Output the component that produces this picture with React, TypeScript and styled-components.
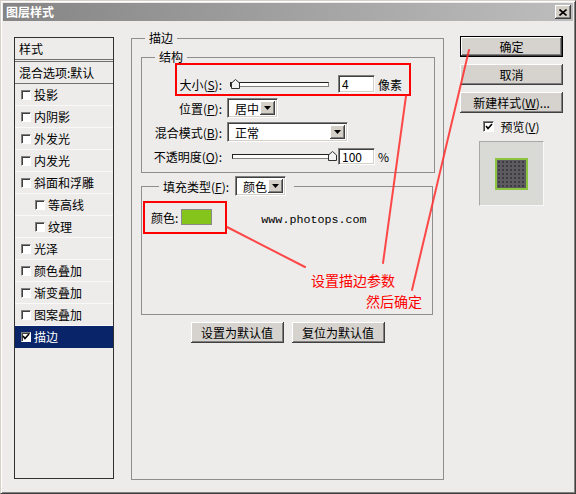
import React from "react";
import styled, { createGlobalStyle } from "styled-components";

const GlobalStyle = createGlobalStyle`
  html, body { margin: 0; padding: 0; background: #edecea; }
  body {
    font-family: "Noto Sans CJK SC", "Liberation Sans", sans-serif;
    font-size: 12px;
    color: #000;
  }
  * { box-sizing: border-box; }
`;

const Window = styled.div`
  position: relative;
  width: 576px;
  height: 494px;
  background: #edecea;
  border: 1px solid;
  border-color: #d4d0c8 #404040 #404040 #d4d0c8;
  box-shadow: inset 1px 1px #ffffff, inset -1px -1px #808080;
  padding: 2px;
  display: flex;
  flex-direction: column;
  overflow: hidden;
`;

const TitleBar = styled.div`
  height: 18px;
  display: flex;
  align-items: center;
  justify-content: space-between;
  padding: 0 2px 0 3px;
  background: linear-gradient(to right, #858585, #bdbdbd);
`;

const Title = styled.span`
  color: #fff;
  font-weight: 700;
  font-size: 12px;
  line-height: 14px;
`;

const CloseButton = styled.div`
  width: 16px;
  height: 14px;
  background: #d4d0c8;
  display: flex;
  align-items: center;
  justify-content: center;
  box-shadow: inset -1px -1px #404040, inset 1px 1px #fff, inset -2px -2px #808080;
`;

const Body = styled.div`
  flex: 1;
  display: flex;
  align-items: flex-start;
  padding: 10px 0 0 11px;
`;

/* ---------- left style list ---------- */

const StyleList = styled.div`
  width: 100px;
  height: 442px;
  margin-top: 6px;
  border: 1px solid #303030;
  display: flex;
  flex-direction: column;
`;

const ListHeader = styled.div`
  height: 24px;
  line-height: 21px;
  padding-left: 4px;
  border-bottom: 3px double #707070;
`;

const ListItem = styled.div<{ $indent?: number; $selected?: boolean; $rule?: boolean }>`
  height: 22px;
  display: flex;
  align-items: center;
  gap: 3px;
  padding-left: ${(p) => p.$indent ?? 6}px;
  background: ${(p) => (p.$selected ? "#0a246a" : "transparent")};
  color: ${(p) => (p.$selected ? "#fff" : "#000")};
  border-bottom: 1px solid ${(p) => (p.$rule ? "#707070" : p.$selected ? "#0a246a" : "#f9f9f9")};
`;

const Box = styled.span<{ $size?: number }>`
  width: ${(p) => p.$size ?? 10}px;
  height: ${(p) => p.$size ?? 10}px;
  flex: none;
  background: #fff;
  border: 1px solid;
  border-color: #808080 #ffffff #ffffff #808080;
  box-shadow: inset 1px 1px #404040;
  display: flex;
  align-items: center;
  justify-content: center;
`;

const Check: React.FC<{ checked?: boolean; size?: number }> = ({ checked, size }) => (
  <Box $size={size}>
    {checked && (
      <svg width="8" height="7" viewBox="0 0 8 7">
        <path d="M1 3 L3 5.5 L7 1" stroke="#000" strokeWidth="1.6" fill="none" />
      </svg>
    )}
  </Box>
);

/* ---------- centre panel ---------- */

const Center = styled.div`
  margin-left: 17px;
`;

const Group = styled.fieldset<{ $w: number; $h: number; $gap?: number }>`
  width: ${(p) => p.$w}px;
  height: ${(p) => p.$h}px;
  min-width: 0;
  margin: ${(p) => p.$gap ?? 0}px 0 0 0;
  padding: 0;
  border: 1px solid #8e8e8e;
`;

const Legend = styled.legend<{ $offset: number }>`
  margin-left: ${(p) => p.$offset}px;
  padding: 0 4px;
  line-height: 14px;
  font-size: 12px;
`;

const FillLegend = styled.legend`
  margin-left: 17px;
  padding: 0 8px 0 4px;
  height: 20px;
  display: flex;
  align-items: center;
  gap: 6px;
`;

const GroupInner = styled.div<{ $top: number }>`
  display: flex;
  flex-direction: column;
  padding: ${(p) => p.$top}px 9px 0 9px;
`;

const Rows = styled.div`
  display: flex;
  flex-direction: column;
  gap: 4px;
  padding-top: 10px;
`;

const Row = styled.div`
  height: 20px;
  display: flex;
  align-items: center;
`;

const Label = styled.span`
  width: 80px;
  margin-right: 5px;
  text-align: right;
  white-space: nowrap;
`;

const SliderWrap = styled.div<{ $w: number; $lead: number }>`
  position: relative;
  width: ${(p) => p.$w}px;
  height: 12px;
  margin-left: ${(p) => p.$lead}px;
  display: flex;
  align-items: center;
`;

const Track = styled.div`
  width: 100%;
  height: 5px;
  background: #fdfdfd;
  border: 1px solid;
  border-color: #202020 #808080 #808080 #202020;
`;

const Thumb = styled.svg<{ $end?: boolean }>`
  position: absolute;
  top: 1px;
  ${(p) => (p.$end ? "right: -4px;" : "left: 1px;")}
`;

const Slider: React.FC<{ w: number; lead: number; end?: boolean }> = ({ w, lead, end }) => (
  <SliderWrap $w={w} $lead={lead}>
    <Track />
    <Thumb $end={end} width="9" height="10" viewBox="0 0 9 10">
      <path d="M0.5 9.5 L0.5 4 L4.5 0.5 L8.5 4 L8.5 9.5 Z" fill="#f2f2f2" stroke="#303030" strokeWidth="1" />
    </Thumb>
  </SliderWrap>
);

const TextInput = styled.div<{ $lead: number; $h?: number }>`
  width: 37px;
  height: ${(p) => p.$h ?? 18}px;
  margin-left: ${(p) => p.$lead}px;
  background: #fff;
  border: 1px solid;
  border-color: #808080 #ffffff #ffffff #808080;
  box-shadow: inset 1px 1px #404040, inset -1px -1px #d4d0c8;
  padding-left: 3px;
  line-height: 16px;
`;

const Unit = styled.span`
  margin-left: 3px;
`;

const Select = styled.div<{ $w: number }>`
  width: ${(p) => p.$w}px;
  height: 20px;
  display: flex;
  align-items: stretch;
  background: #fff;
  border: 1px solid;
  border-color: #808080 #ffffff #ffffff #808080;
  box-shadow: inset 1px 1px #404040, inset -1px -1px #d4d0c8;
  padding: 2px;
`;

const SelectValue = styled.span`
  flex: 1;
  padding-left: 5px;
  line-height: 15px;
`;

const SelectArrow = styled.span`
  width: 15px;
  background: #d4d0c8;
  display: flex;
  align-items: center;
  justify-content: center;
  box-shadow: inset -1px -1px #404040, inset 1px 1px #fff, inset -2px -2px #808080;
`;

const Dropdown: React.FC<{ w: number; value: string }> = ({ w, value }) => (
  <Select $w={w}>
    <SelectValue>{value}</SelectValue>
    <SelectArrow>
      <svg width="7" height="4" viewBox="0 0 7 4">
        <path d="M0 0 H7 L3.5 4 Z" fill="#000" />
      </svg>
    </SelectArrow>
  </Select>
);

const ColorRow = styled.div`
  display: flex;
  align-items: center;
  height: 16px;
  margin-top: 13px;
`;

const Swatch = styled.span`
  width: 31px;
  height: 16px;
  margin-left: 3px;
  background: #84c41b;
  border: 1px solid #8a8a8a;
`;

const Url = styled.span`
  margin-left: 49px;
  font-family: "Liberation Mono", "Courier New", monospace;
  font-size: 11.7px;
  line-height: 16px;
  margin-top: 6px;
`;

const ButtonRow = styled.div`
  display: flex;
  justify-content: center;
  gap: 8px;
  margin-top: 7px;
`;

const Button = styled.div<{ $w: number; $default?: boolean }>`
  width: ${(p) => p.$w}px;
  height: 21px;
  display: flex;
  align-items: center;
  justify-content: center;
  background: #d6d3ce;
  border: ${(p) => (p.$default ? "1px solid #000" : "none")};
  box-shadow: inset -1px -1px #404040, inset 1px 1px #fff, inset -2px -2px #808080;
  white-space: nowrap;
`;

/* ---------- right column ---------- */

const Side = styled.div`
  width: 103px;
  margin-left: 16px;
  margin-top: 5px;
  display: flex;
  flex-direction: column;
  align-items: center;
  gap: 7px;
`;

const PreviewToggle = styled.div`
  height: 12px;
  display: flex;
  align-items: center;
  gap: 6px;
`;

const PreviewBox = styled.div`
  width: 65px;
  height: 65px;
  margin-top: 2px;
  background: #d9d9d6;
  border: 1px solid;
  border-color: #a8a8a8 #f8f8f8 #f8f8f8 #a8a8a8;
  display: flex;
  align-items: center;
  justify-content: center;
`;

const PreviewSquare = styled.div`
  width: 33px;
  height: 32px;
  background-color: #5d5a60;
  background-image: radial-gradient(#3c3a3e 0.7px, transparent 0.8px);
  background-size: 4px 4px;
  border: 2px solid #8cc43f;
`;

/* ---------- annotation layer ---------- */

const Annotations = styled.div`
  position: absolute;
  top: -1px;
  left: -1px;
  width: 576px;
  height: 494px;
  pointer-events: none;
`;

const Note = styled.div<{ $x: number; $y: number }>`
  position: absolute;
  left: ${(p) => p.$x}px;
  top: ${(p) => p.$y}px;
  color: #ff0000;
  font-size: 14px;
  line-height: 16px;
  white-space: nowrap;
`;

const items: { name: string; indent?: number }[] = [
  { name: "投影" },
  { name: "内阴影" },
  { name: "外发光" },
  { name: "内发光" },
  { name: "斜面和浮雕" },
  { name: "等高线", indent: 20 },
  { name: "纹理", indent: 20 },
  { name: "光泽" },
  { name: "颜色叠加" },
  { name: "渐变叠加" },
  { name: "图案叠加" },
];

export default function App() {
  return (
    <>
      <GlobalStyle />
      <Window>
        <TitleBar>
          <Title>图层样式</Title>
          <CloseButton>
            <svg width="8" height="7" viewBox="0 0 8 7">
              <path d="M0.5 0.5 L7.5 6.5 M7.5 0.5 L0.5 6.5" stroke="#000" strokeWidth="1.6" />
            </svg>
          </CloseButton>
        </TitleBar>

        <Body>
          <StyleList>
            <ListHeader>样式</ListHeader>
            <ListItem $indent={4} $rule>混合选项:默认</ListItem>
            {items.map((it) => (
              <ListItem key={it.name} $indent={it.indent}>
                <Check />
                {it.name}
              </ListItem>
            ))}
            <ListItem $selected>
              <Check checked />
              描边
            </ListItem>
          </StyleList>

          <Center>
            <Group $w={313} $h={449}>
              <Legend $offset={13}>描边</Legend>
              <GroupInner $top={5}>
                <Group $w={294} $h={123}>
                  <Legend $offset={13}>结构</Legend>
                  <Rows>
                    <Row>
                      <Label>大小(<u>S</u>):</Label>
                      <Slider w={99} lead={3} />
                      <TextInput $lead={9}>4</TextInput>
                      <Unit>像素</Unit>
                    </Row>
                    <Row>
                      <Label>位置(<u>P</u>):</Label>
                      <Dropdown w={51} value="居中" />
                    </Row>
                    <Row>
                      <Label>混合模式(<u>B</u>):</Label>
                      <Dropdown w={121} value="正常" />
                    </Row>
                    <Row>
                      <Label>不透明度(<u>O</u>):</Label>
                      <Slider w={101} lead={5} end />
                      <TextInput $lead={5} $h={17}>100</TextInput>
                      <Unit>%</Unit>
                    </Row>
                  </Rows>
                </Group>

                <Group $w={292} $h={139} $gap={3}>
                  <FillLegend>
                    <span>填充类型(<u>F</u>):</span>
                    <Dropdown w={51} value="颜色" />
                  </FillLegend>
                  <GroupInner $top={0}>
                    <ColorRow>
                      颜色:
                      <Swatch />
                      <Url>www.photops.com</Url>
                    </ColorRow>
                  </GroupInner>
                </Group>

                <ButtonRow>
                  <Button $w={93}>设置为默认值</Button>
                  <Button $w={93}>复位为默认值</Button>
                </ButtonRow>
              </GroupInner>
            </Group>
          </Center>

          <Side>
            <Button $w={103} $default>确定</Button>
            <Button $w={103}>取消</Button>
            <Button $w={103}>新建样式(<u>W</u>)...</Button>
            <PreviewToggle>
              <Check checked size={11} />
              <span>预览(<u>V</u>)</span>
            </PreviewToggle>
            <PreviewBox>
              <PreviewSquare />
            </PreviewBox>
          </Side>
        </Body>

        <Annotations>
          <svg width="576" height="494" viewBox="0 0 576 494">
            <rect x="176" y="64" width="234" height="31" fill="none" stroke="#ff0000" strokeWidth="2" />
            <rect x="144" y="202" width="82" height="31" fill="none" stroke="#ff0000" strokeWidth="2" />
            <g stroke="#ff2b2b" strokeWidth="2" strokeOpacity="0.85" strokeLinecap="round">
              <line x1="406" y1="96" x2="383" y2="263" />
              <line x1="469" y1="50" x2="412" y2="290" />
              <line x1="227" y1="227" x2="305" y2="267" />
            </g>
          </svg>
          <Note $x={311} $y={272}>设置描边参数</Note>
          <Note $x={366} $y={293}>然后确定</Note>
        </Annotations>
      </Window>
    </>
  );
}
